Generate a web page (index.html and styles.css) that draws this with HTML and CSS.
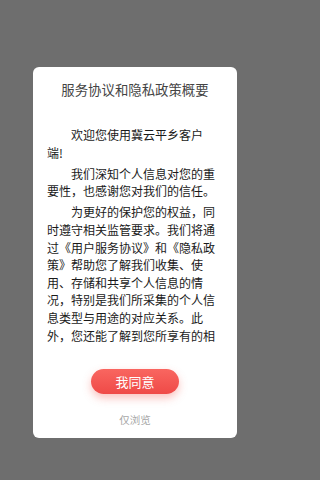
FILE: index.html
```html
<!DOCTYPE html>
<html lang="zh-CN">
<head>
<meta charset="utf-8">
<title>服务协议和隐私政策概要</title>
<link rel="stylesheet" href="styles.css">
</head>
<body>
<div class="mask">
  <div class="dialog">
    <div class="title">服务协议和隐私政策概要</div>
    <div class="content">
      <p>欢迎您使用冀云平乡客户端!</p>
      <p>我们深知个人信息对您的重要性，也感谢您对我们的信任。</p>
      <p>为更好的保护您的权益，同时遵守相关监管要求。我们将通过《用户服务协议》和《隐私政策》帮助您了解我们收集、使用、存储和共享个人信息的情况，特别是我们所采集的个人信息类型与用途的对应关系。此外，您还能了解到您所享有的相</p>
    </div>
    <button class="agree">我同意</button>
    <div class="browse">仅浏览</div>
  </div>
</div>
</body>
</html>
```
FILE: styles.css
```css
html, body {
  margin: 0;
  padding: 0;
}
body {
  width: 270px;
  height: 480px;
  background: #6e6e6e;
  font-family: "Noto Sans CJK SC", "Noto Sans", sans-serif;
  overflow: hidden;
}
.mask {
  padding-top: 67px;
  display: flex;
  justify-content: center;
}
.dialog {
  width: 204px;
  height: 371px;
  background: #ffffff;
  border-radius: 6px;
  display: flex;
  flex-direction: column;
  align-items: center;
  box-sizing: border-box;
  padding-top: 12px;
}
.title {
  font-size: 13.4px;
  line-height: 20px;
  color: #444444;
  text-align: center;
}
.content {
  align-self: stretch;
  margin-top: 23px;
  height: 224px;
  box-sizing: border-box;
  padding: 4px 21px 0 14px;
  overflow: hidden;
}
.content p {
  margin: 0 0 3.5px;
  font-size: 12px;
  line-height: 17.6px;
  color: #1a1a1a;
  text-indent: 2em;
}
.agree {
  margin-top: 23px;
  width: 88px;
  height: 25px;
  border: none;
  border-radius: 13px;
  background: linear-gradient(180deg, #f96660 0%, #ef4a47 100%);
  box-shadow: 0 4px 9px rgba(240, 80, 70, 0.35);
  color: #ffffff;
  font-family: inherit;
  font-size: 13px;
  line-height: 25px;
  padding: 0;
}
.browse {
  margin-top: 19px;
  font-size: 10.5px;
  line-height: 14px;
  color: #a8a8a8;
}
```
